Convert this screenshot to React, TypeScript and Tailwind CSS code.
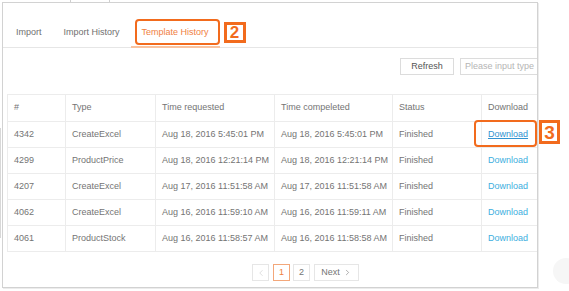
import { ChevronLeft, ChevronRight } from "lucide-react";

const rows = [
  { id: "4342", type: "CreateExcel", req: "Aug 18, 2016 5:45:01 PM", done: "Aug 18, 2016 5:45:01 PM" },
  { id: "4299", type: "ProductPrice", req: "Aug 18, 2016 12:21:14 PM", done: "Aug 18, 2016 12:21:14 PM" },
  { id: "4207", type: "CreateExcel", req: "Aug 17, 2016 11:51:58 AM", done: "Aug 17, 2016 11:51:58 AM" },
  { id: "4062", type: "CreateExcel", req: "Aug 16, 2016 11:59:10 AM", done: "Aug 16, 2016 11:59:11 AM" },
  { id: "4061", type: "ProductStock", req: "Aug 16, 2016 11:58:57 AM", done: "Aug 16, 2016 11:58:58 AM" },
];

const cols = "grid grid-cols-[58px_90px_119px_118px_89px_70px]";
const cell = "flex items-center pl-[6px] border-r border-[#ececec] whitespace-nowrap";

function Badge({ n }: { n: string }) {
  return (
    <div className="w-[22px] h-[21px] border-[3px] border-[#f26b1d] bg-white flex items-center justify-center text-[#f26b1d] text-[17px] font-bold leading-none">
      {n}
    </div>
  );
}

function Tabs() {
  return (
    <div className="h-[45px] border-b border-[#e6e6e6] flex pl-[2px] text-[9px]">
      <div className="px-[11px] pt-[16px] flex items-center text-[#707070]">Import</div>
      <div className="px-[11px] pt-[16px] flex items-center text-[#707070]">Import History</div>
      <div className="relative px-[11px] pt-[16px] flex items-center text-[#f0803f] border-b-2 border-[#f9c3a0] -mb-px">
        Template History
        <div className="absolute left-[4px] top-[16px] w-[85px] h-[26px] rounded-[4px] border-2 border-[#f26b1d]" />
        <div className="absolute left-[93px] top-[19px]">
          <Badge n="2" />
        </div>
      </div>
    </div>
  );
}

function Toolbar() {
  return (
    <div className="h-[46px] flex items-start pt-[10px] pl-[397px] gap-[6px] text-[9px]">
      <button className="w-[54px] h-[17px] shrink-0 border border-[#dcdcdc] bg-white text-[#555] flex items-center justify-center">
        Refresh
      </button>
      <div className="w-[110px] h-[17px] shrink-0 border border-[#dcdcdc] flex items-center pl-[4px] text-[#b5b5b5] whitespace-nowrap">
        Please input type
      </div>
    </div>
  );
}

function Table() {
  return (
    <div className="ml-[4px] w-[544px] border-l border-t border-[#ececec] text-[9px] text-[#747474]">
      <div className={`${cols} h-[27px] border-b border-[#ececec]`}>
        <div className={cell}>#</div>
        <div className={cell}>Type</div>
        <div className={cell}>Time requested</div>
        <div className={cell}>Time compeleted</div>
        <div className={cell}>Status</div>
        <div className={cell}>Download</div>
      </div>
      {rows.map((r, i) => (
        <div key={r.id} className={`${cols} h-[26px] border-b border-[#ececec]`}>
          <div className={cell}>{r.id}</div>
          <div className={cell}>{r.type}</div>
          <div className={cell}>{r.req}</div>
          <div className={cell}>{r.done}</div>
          <div className={cell}>Finished</div>
          <div className={`${cell} relative`}>
            {i === 0 ? (
              <>
                <span className="text-[#3393d0] underline">Download</span>
                <div className="absolute left-[-8px] top-[-2px] w-[63px] h-[27px] rounded-[4px] border-2 border-[#f26b1d]" />
              </>
            ) : (
              <span className="text-[#3eaede]">Download</span>
            )}
          </div>
        </div>
      ))}
    </div>
  );
}

function Pager() {
  return (
    <div className="flex items-center gap-[3px] pl-[249px] pt-[12px] text-[9px] text-[#747474]">
      <div className="w-[17px] h-[17px] border border-[#e6e6e6] flex items-center justify-center text-[#ccc]">
        <ChevronLeft size={10} strokeWidth={1.5} />
      </div>
      <div className="ml-[1px] w-[17px] h-[17px] border border-[#f3a77a] flex items-center justify-center text-[#f0803f]">
        1
      </div>
      <div className="w-[17px] h-[17px] border border-[#e6e6e6] flex items-center justify-center">2</div>
      <div className="ml-[1px] w-[45px] h-[17px] border border-[#e6e6e6] flex items-center justify-center gap-[3px]">
        Next
        <ChevronRight size={9} strokeWidth={1.5} />
      </div>
    </div>
  );
}

export default function App() {
  return (
    <div
      className="relative w-[569px] h-[291px] bg-white overflow-hidden"
      style={{ fontFamily: "'Liberation Sans', Arial, sans-serif" }}
    >
      <div className="h-[2px] flex">
        <div className="ml-[70px] w-px bg-[#cfcfcf]" />
        <div className="ml-[38px] w-px bg-[#cfcfcf]" />
      </div>
      <div className="ml-[2px] w-[536px] h-[286px] border border-[#d2d2d2] overflow-hidden flex flex-col shadow-[1px_1px_0_#ececec]">
        <Tabs />
        <Toolbar />
        <Table />
        <Pager />
      </div>
      <div className="absolute left-[539px] top-[120px]">
        <div className="w-[21px] h-[24px] border-[3px] border-[#f26b1d] bg-white flex items-center justify-center text-[#f26b1d] text-[19px] font-bold leading-none">
          3
        </div>
      </div>
      <div className="absolute left-[0px] top-[128px] w-px h-[110px] bg-[#d8d8d8]" />
      <div className="absolute left-[553px] top-[258px] w-[26px] h-[26px] rounded-full bg-[#f6f6f6]" />
    </div>
  );
}
